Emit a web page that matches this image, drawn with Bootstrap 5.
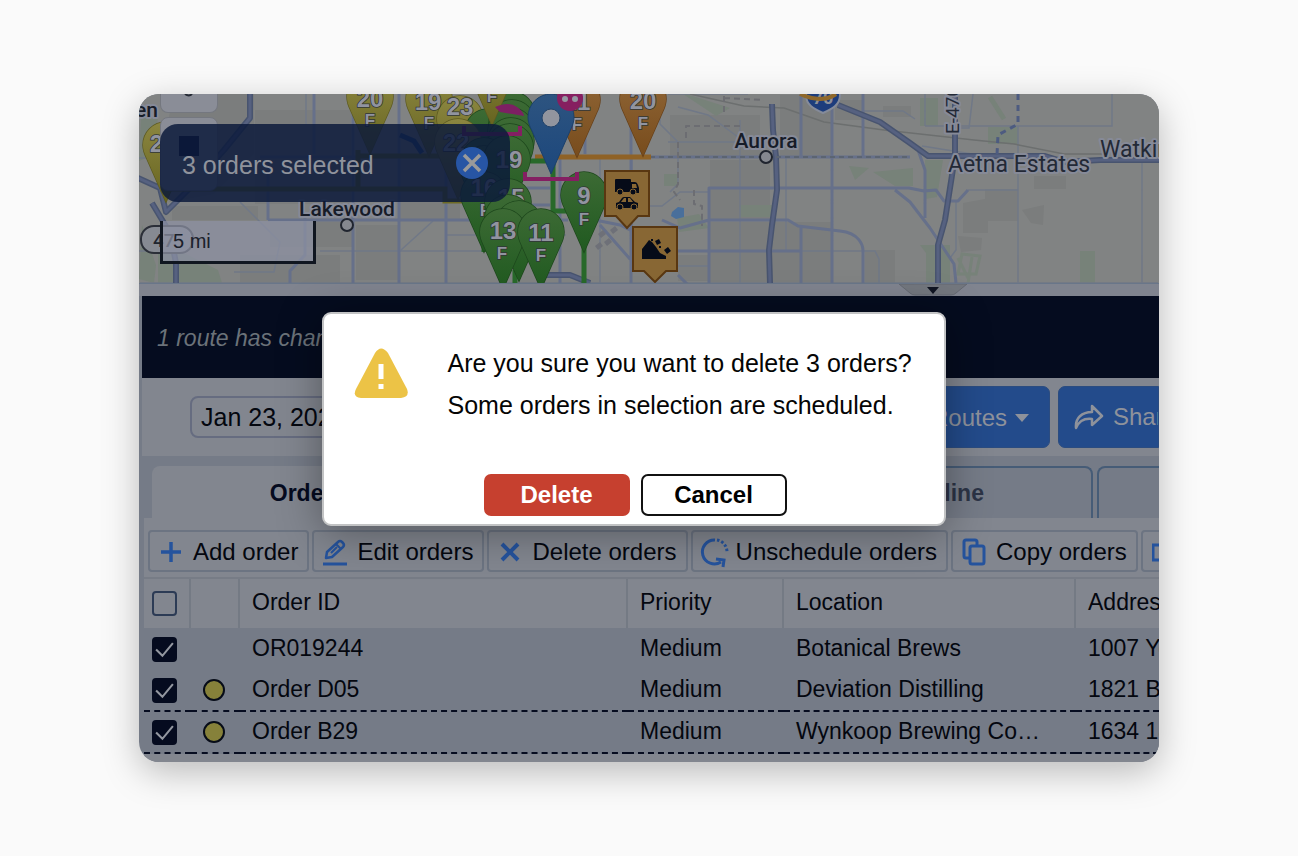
<!DOCTYPE html>
<html lang="en">
<head>
<meta charset="utf-8">
<meta name="viewport" content="width=device-width, initial-scale=1">
<title>Delete orders</title>
<link href="https://cdn.jsdelivr.net/npm/bootstrap@5.3.0/dist/css/bootstrap.min.css" rel="stylesheet">
<style>
:root{--ink:#04070f;--panel:#82868f;--sel:#757b87;--navy:#050c1f;--blue:#234b8b;--line:#6c7482}
body{background:#fafafa;font-family:"Liberation Sans",Arial,sans-serif;color:var(--ink);font-size:23px;line-height:28px}
.stage{padding:94px 139px}
.app{border-radius:20px;background:var(--sel)}
.app-shadow{border-radius:20px;box-shadow:0 10px 36px rgba(0,0,0,.26)}
.map-area{height:189px;background:#818383}
.map-svg{font-family:Roboto,sans-serif;font-weight:500}
.zoom-stack{left:21px;top:0}
.zoom-key{width:58px;height:19px;background:#8a8d97;border:1px solid #74777f;border-top:0;border-radius:0 0 8px 8px;padding:0}
.stop-key{width:58px;height:74px;background:#8a8d97;border:1px solid #74777f;border-radius:8px;padding:0}
.scale-box{left:21px;top:127px;width:156px;height:43px;border:3px solid #101620;border-top:0;background:rgba(142,146,163,.72);font-size:20px;padding:6px 10px;color:#1a202b}
.notice{left:21px;top:30px;width:350px;height:78px;border-radius:18px;background:rgba(11,25,58,.84);font-size:25px;color:#8f939c;padding:4px 22px 0}
.notice button{width:32px;height:32px;background:#2755a4;padding:0}
.splitter{height:13px;background:#80848f;border-top:1px solid #697689}
.work{margin-left:3px}
.route-note{height:82px;background:var(--navy);color:#6b7279;font-style:italic;padding:2px 15px 0}
.plan-bar{height:78px;background:var(--panel);padding-left:48px;gap:8px}
.date-box{width:200px;height:42px;font-size:25px;background:transparent;border:2px solid #666c80;border-radius:8px;padding:0 9px;color:var(--ink)}
.plan-btn{height:62px;font-size:24px;color:#8e929b;background:var(--blue);border:1px solid #2b4c80;border-radius:7px;padding:0}
.routes-btn{width:170px;padding:2px 20px 0 0}
.share-btn{width:101px;padding-left:15px;border-radius:7px 0 0 7px;overflow:hidden}
.caret{border:7px solid transparent;border-top:8px solid #8e929b;border-bottom:0}
.tab-strip{padding:10px 0 0 10px;gap:4px;height:62px}
.tab-strip button{flex:0 0 311px;border:2px solid #465c77;border-bottom:0;border-radius:8px 8px 0 0;background:transparent;color:#2c3446;font-weight:700;padding:0}
.tab-strip .picked{background:var(--panel);border-color:var(--panel);color:#050b1f}
.order-pane{margin-left:2px;background:var(--panel)}
.tool-row{padding:12px 0 0 4px;gap:3px;height:59px}
.tool{flex:none;height:42px;border:2px solid var(--line);border-radius:4px;background:transparent;color:var(--ink);font-size:24px;padding:1px 9px 0 9px;gap:10px;line-height:28px}
.tool svg{width:24px;height:28px;color:#25539d}
.orders{table-layout:fixed;border-collapse:separate;border-spacing:0;border-top:2px solid #777c86}
.orders th,.orders td{padding:0 0 3px 12px;font-weight:400;white-space:nowrap;overflow:hidden}
.orders th{height:49px;border-right:2px solid #747a84}
.orders td{height:42px;background:var(--sel)}
.orders .cut td{border-bottom:2px dashed #060c20}
.orders td:first-child,.orders th:first-child{padding:0 0 0 8px}
.orders td:nth-child(2){padding-bottom:0}
.c-box{width:47px}.c-dot{width:49px}.c-id{width:388px}.c-pri{width:156px}.c-loc{width:292px}
.orders .form-check-input{width:25px;height:25px;margin:0;border:2px solid #2c3b55;border-radius:4px;background-color:transparent;float:none;display:block}
.orders .form-check-input:checked{background-color:#050b1f;border-color:#050b1f;background-image:url("data:image/svg+xml,%3Csvg xmlns='http://www.w3.org/2000/svg' viewBox='0 0 20 20'%3E%3Cpath fill='none' stroke='%2392969f' stroke-width='2' d='m2 10 6 6 10-12'/%3E%3C/svg%3E")}
.dot{width:22px;height:22px;border:2px solid #070c18;border-radius:50%;background:#86813a}
.foot{height:8px}
.ask-layer{inset:0;padding:218px 31px 0 0}
.ask{width:624px;height:214px;border-radius:9px;border:2px solid #c2c3c4;background:#fff;box-shadow:0 6px 44px rgba(0,0,0,.36);color:#050505}
.ask-top{padding:28px 0 0 30px;gap:39px;font-size:25px;line-height:42px}
.ask-top svg{width:55px;height:50px;margin-top:6px}
.ask-keys{gap:11px;padding:48px 0 0 160px}
.ask-keys button{width:146px;height:42px;font-size:24px;font-weight:700;border-radius:7px;padding:0;line-height:28px}
.yes{background:#c6402f;border:2px solid #c6402f;color:#fff}
.no{background:#fff;border:2px solid #111;color:#000}
</style>
</head>
<body>
<main class="stage">
<div class="app-shadow position-relative">
<div class="app overflow-hidden">

<section class="map-area position-relative overflow-hidden" aria-label="Map">
<svg class="map-svg d-block w-100 h-100" viewBox="139 94 1020 189" preserveAspectRatio="xMinYMin slice">
<defs>
<linearGradient id="gr" x1="0" y1="0" x2="0" y2="1"><stop offset="0" stop-color="#3c6a34"/><stop offset="1" stop-color="#205a20"/></linearGradient>
<linearGradient id="ye" x1="0" y1="0" x2="0" y2="1"><stop offset="0" stop-color="#8b8640"/><stop offset="1" stop-color="#67641f"/></linearGradient>
<linearGradient id="or" x1="0" y1="0" x2="0" y2="1"><stop offset="0" stop-color="#8f6536"/><stop offset="1" stop-color="#784c1c"/></linearGradient>
<linearGradient id="bl" x1="0" y1="0" x2="0" y2="1"><stop offset="0" stop-color="#2d5480"/><stop offset="1" stop-color="#1c477c"/></linearGradient>
<path id="pin" d="M0 0-19-43C-22-49-23-53-23-57A23 23 0 0 1 23-57C23-53 22-49 19-43Z"/>
</defs>
<g fill="#7b7d7d">
<path d="M174 94h80v60l-40 40-45 8-10-40zM255 110h96v94h-96zM172 206h86v14h-86zM270 222h82v25h-82zM356 225h42v55h-42zM240 255h100v28H240zM400 160h60v60h-60zM670 115h90v42h-90zM710 160h60v60h-60zM780 95h52v62h-52zM710 222h122v60H710zM835 100h28v20h-28zM865 250h30v33h-30zM678 255h30v26h-30z"/>
<path d="M963 203l22-4v-10h33v32h-30v12h-25zM958 236l24 2-1 12-20 2zM1022 210l22-5-1 20-12-2zM1034 176h32v13h-32zM883 106h28v11h-28z"/>
</g>
<g fill="#778279">
<path d="M141 115l18-5-6 45-14 6zM142 225l14 40-2 18-15-4zM158 240l60 30 4 13h-64zM560 200h22v20zM677 218l22-4 10 14-30 4zM849 166l20 2-14 12zM873 172l40-4v18l-18 0zM925 160h18l-6 37-12 2zM920 245h30v38h-24v-30zM988 127h30v17h-30zM1080 251h15v32h-15zM740 205h32v12h-32zM664 174h14v12h-14zM920 98h18v28h-18z"/>
<path d="M990 97l14 22" stroke="#778279" stroke-width="5"/>
<path d="M962 254l18 2-4 18-18 0zM968 283l4-26M958 258l10 20" fill="none" stroke="#778279" stroke-width="3"/>
<path d="M680 92l50 16-14 8z"/>
</g>
<g fill="none" stroke="#707887" stroke-width="1.500">
<path d="M139 158h36M139 251h20M306 94v30M240 202l40 40-6 30-40 0M320 251h230M140 283h1018M401 250l32-29M660 94v30l18 18v42l-8 8M668 94h80M668 142h95M650 206h12l18-14h29M740 120v163M786 157v93M863 111h40l12 8M678 266h31M800 251h75l4 8v24M678 107l30 8 30 22M925 126h187v-32M925 94v32M968 190h50M1018 126v157M1142 160v123M956 200v50l-6 8M922 146l50 8M973 94l-4 34h-14M490 94v34M632 157v94M600 157v126M446 235h120"/>
<path d="M690 94l54 12 40 2 40 14 60 8 90 10 40 4 50 10 40 0" stroke="#6c6f6f"/>
</g>
<g fill="none" stroke="#66708a" stroke-width="3" stroke-linejoin="round">
<path d="M353 94v189M268 220h300M268 220v-60M399 94v189M446 94v189M314 94v60M560 94v189M585 94v60M631 94v189M260 157h140M290 283v-12l15-16v-40M470 188h80M480 205h70M590 219l30 6 24 12M600 225l30 34 20 10"/>
<path d="M649 157h261M709 283v-95h180l20 0 15 3 12-1 8 11h14l10-11M662 220l18 8 29-8h79l10 6 42 5c20 2 23 15 23 20v32M678 251h122M801 94v63M801 226v57M832 94v189M863 94v63M895 190l15 12 20 26 24 36 2 19M918 150l7 20v48M678 275l10 10"/>
</g>
<g fill="none" stroke-linejoin="round">
<path d="M250 94v24l-26 32-34 38-24 24-6-24-22-10M176 283v-20l-6-30-18-30M772 104l1 26 3 27 1 33-5 35-3 25 1 33M838 105l42 17 30 21 18 13h30l87 0 20 6 35-2h64M955 94v62l-10 64-7 25v38M545 275l25 0 20 8" stroke="#48546f" stroke-width="6"/>
<path d="M250 94v24l-26 32-34 38-24 24-6-24-22-10M176 283v-20l-6-30-18-30M772 104l1 26 3 27 1 33-5 35-3 25 1 33M838 105l42 17 30 21 18 13h30l87 0 20 6 35-2h64M955 94v62l-10 64-7 25v38M545 275l25 0 20 8" stroke="#566180" stroke-width="3"/>
<path d="M1018 94v30l-20 11-1 20" stroke="#4d5b80" stroke-width="3" stroke-dasharray="6 5"/>
<path d="M650 157h260" stroke="#5b6472" stroke-width="2" stroke-dasharray="5 4"/>
<path d="M740 126h-54v16M678 142v42l-4 8 6 8M694 190v14l8 2v20M724 96v20M724 98l40 2" stroke="#6c6d72" stroke-width="2" stroke-dasharray="6 4"/>
</g>
<path d="M672 212l6-5 6 1v9l-8 2-5-3z" fill="#496f9b"/>
<g fill="#6e7078"><path d="M598 234l5-4 3 4-5 4zM604 242l5-4 3 4-5 4zM595 246l5-4 3 4-5 4zM610 230l5-4 3 4-5 4z"/></g>
<!-- Interstate shield -->
<path d="M806 90h34v5c0 10-8 14-17 18-9-4-17-8-17-18z" fill="#1d3d7c" stroke="#858b9a" stroke-width="2"/>
<text x="823" y="104" font-size="18" font-weight="700" text-anchor="middle" fill="#8c909a">70</text>
<path d="M800 94q22 10 36 0" stroke="#8f682b" stroke-width="4" fill="none"/>
<!-- place names -->
<g fill="#171c28" stroke="#868a98" stroke-width="4" paint-order="stroke" font-size="21" stroke-linejoin="round">
<text x="135" y="117">en</text>
<text x="347" y="216" text-anchor="middle">Lakewood</text>
<text x="766" y="148" text-anchor="middle">Aurora</text>
<g fill="#232936" font-size="23" font-weight="400">
<text x="948" y="172">Aetna Estates</text>
<text x="1100" y="157">Watkins</text>
<text transform="translate(959 134) rotate(-90)" font-size="19">E-470</text>
</g>
</g>
<circle cx="347" cy="225" r="6" fill="#85888f" stroke="#20252f" stroke-width="2"/>
<circle cx="766" cy="157" r="6" fill="#85888f" stroke="#20252f" stroke-width="2"/>
<rect x="141" y="226" width="52" height="27" rx="13" fill="#868a92" stroke="#2b2f38" stroke-width="2"/>
<text x="153" y="247" font-size="19" fill="#20252f">47</text>
<!-- routes -->
<g fill="none" stroke-width="5">
<path d="M160 189h285v12h20M358 156h86M358 150v38" stroke="#6d6a24"/>
<path d="M535 157h116" stroke="#8f6226"/>
<path d="M530 161h23v50h14M584 240v43M484 200v52M515 270v13" stroke="#28692a"/>
<path d="M400 135l14 6 8 12" stroke="#24477a"/>
</g>
<!-- numbered stops -->
<g font-family="Liberation Sans,sans-serif" font-weight="700" fill="#9194a0" stroke="#303638" stroke-width="1.500" paint-order="stroke" text-anchor="middle" font-size="24">
<g fill="url(#ye)" stroke="#5d5a20"><use href="#pin" x="166" y="202"/><use href="#pin" x="370" y="154"/><use href="#pin" x="429" y="156"/><use href="#pin" x="460" y="176"/></g>
<text x="163" y="152">21</text><text x="370" y="107">20</text><text x="370" y="126" font-size="17">F</text>
<text x="428" y="110">19</text><text x="429" y="129" font-size="17">F</text><text x="460" y="115">23</text>
<g fill="url(#gr)" stroke="#1d471c"><use href="#pin" x="488" y="189"/><use href="#pin" x="512" y="172"/><use href="#pin" x="512" y="180"/><use href="#pin" x="511" y="188"/></g>
<g fill="url(#ye)" stroke="#5d5a20"><use href="#pin" x="458" y="199"/><use href="#pin" x="492" y="125"/></g>
<text x="456" y="151">22</text><text x="492" y="102" font-size="17">F</text>
<path d="M495 107q14-6 22 0 6 4 7 9l-24 -4z" fill="#7d2063" stroke="none"/>
<g fill="url(#gr)" stroke="#1d471c"><use href="#pin" x="511" y="198"/><use href="#pin" x="510" y="204"/><use href="#pin" x="484" y="218"/><use href="#pin" x="484" y="226"/><use href="#pin" x="507" y="216"/></g>
<text x="509" y="168">19</text>
<g fill="url(#gr)" stroke="#1d471c"><use href="#pin" x="484" y="252"/></g><text x="484" y="196">16</text><text x="485" y="216" font-size="17">F</text>
<g fill="url(#gr)" stroke="#1d471c"><use href="#pin" x="508" y="259"/></g><text x="511" y="206">15</text>
<g fill="url(#gr)" stroke="#1d471c"><use href="#pin" x="508" y="275"/><use href="#pin" x="519" y="281"/></g>
<g fill="url(#gr)" stroke="#1d471c"><use href="#pin" x="503" y="289"/><use href="#pin" x="541" y="289"/><use href="#pin" x="584" y="252"/></g>
<text x="503" y="239">13</text><text x="541" y="241">11</text><text x="584" y="204">9</text>
<g font-size="17"><text x="502" y="259">F</text><text x="541" y="261">F</text><text x="584" y="225">F</text></g>
<g fill="url(#or)" stroke="#674019"><use href="#pin" x="577" y="157"/><use href="#pin" x="643" y="156"/></g>
<text x="577" y="110">21</text><text x="643" y="109">20</text><g font-size="17"><text x="577" y="130">F</text><text x="643" y="129">F</text></g>
</g>
<use href="#pin" x="551" y="174" fill="url(#bl)" stroke="#1c416c"/><circle cx="551" cy="118" r="9" fill="#92959e" stroke="#24446a"/>
<circle cx="570" cy="98" r="13" fill="#861f60"/><circle cx="565" cy="99" r="3" fill="#9497a0"/><circle cx="575" cy="99" r="3" fill="#9497a0"/>
<path d="M464 126v8h56v-8M525 172v7h52v-7" fill="none" stroke="#841f62" stroke-width="4"/>
<!-- road hazard signs -->
<g fill="#886734" stroke="#593711" stroke-width="2">
<path d="M605 171h44v45h-11l-11 12-11-12h-11z"/><path d="M633 227h44v44h-11l-11 11-11-11h-11z"/>
</g>
<g fill="#060b18">
<path d="M615 180q0-1 1-1h14q1 0 1 1v12h-16z"/><path fill-rule="evenodd" d="M631 182h4q2 0 3 3l1 3v5h-8zM632 184v4h5l-1-4z"/><circle cx="620" cy="192" r="3" stroke="#886734"/><circle cx="633" cy="192" r="3" stroke="#886734"/>
<path fill-rule="evenodd" d="M616 203l3-1 3-4q1-1 2-1h6l5 5 3 1v5h-22zM621 202h5v-4h-2zM628 202h5l-3-4h-2z"/><circle cx="620" cy="207" r="3" stroke="#886734"/><circle cx="634" cy="207" r="3" stroke="#886734"/>
<path d="M642 259v-10l4-5 3-4 3 2 4 5 4 6 6 3v3zM655 241l4-2 2 4-4 2zM664 250l4-3 3 4-4 3zM651 239h2v2h-2zM659 246h2v2h-2z"/>
</g>
</svg>

<div class="zoom-stack position-absolute d-flex flex-column gap-1">
<button class="zoom-key d-flex justify-content-center" aria-label="Zoom out"><svg width="14" height="3"><path d="M3 0q4 3 7 0" stroke="#252a35" stroke-width="2" fill="none"/></svg></button>
<button class="stop-key d-flex justify-content-center pt-3" aria-label="Stop"><svg width="20" height="22"><path d="M0 2h20v20H0z" fill="#0d1733"/></svg></button>
</div>
<div class="scale-box position-absolute">5 mi</div>
<div class="notice position-absolute d-flex align-items-center justify-content-between" role="status">
<span>3 orders selected</span>
<button class="btn rounded-circle d-flex align-items-center justify-content-center mb-1" aria-label="Clear selection"><svg width="20" height="20" viewBox="0 0 20 20"><path d="M2 2l16 16M18 2L2 18" stroke="#9a9a9a" stroke-width="3.500"/></svg></button>
</div>
</section>

<div class="splitter d-flex justify-content-end">
<svg width="260" height="12" viewBox="0 0 260 12"><path d="M0 0h68l-11 9q-2 2-5 2H16q-3 0-5-2z" fill="#73777e" stroke="#656972"/><path d="M28 3h12l-6 7z" fill="#101522"/></svg>
</div>

<div class="work">
<div class="route-note d-flex align-items-center">1 route has changed</div>
<div class="plan-bar d-flex align-items-center">
<input class="date-box" type="text" value="Jan 23, 2024" aria-label="Date">
<button class="plan-btn routes-btn ms-auto d-flex align-items-center justify-content-end gap-2">Routes <span class="caret"></span></button>
<button class="plan-btn share-btn d-flex align-items-center"><svg class="flex-shrink-0 me-2" width="31" height="28" viewBox="0 0 31 28"><path d="M18 3l10 10-10 9v-6C10 15 5 18 2 25 1 15 8 9 18 9z" fill="none" stroke="#8e929b" stroke-width="2.500" stroke-linejoin="round"/></svg>Share</button>
</div>
<div class="tab-strip d-flex overflow-hidden">
<button class="picked">Orders</button><button>Routes</button><button>Timeline</button><button aria-label="More"></button>
</div>

<div class="order-pane">
<div class="tool-row d-flex overflow-hidden">
<button class="tool d-flex align-items-center"><svg viewBox="0 0 24 28"><path d="M12 4v20M2 14h20" stroke="currentColor" stroke-width="3.500"/></svg>Add order</button>
<button class="tool d-flex align-items-center"><svg viewBox="0 0 24 28"><path d="M0 26h24" stroke="currentColor" stroke-width="3"/><path d="M3 20l1-6L15 4q2-2 4 0l1 1q2 2 0 4L9 19z" fill="none" stroke="currentColor" stroke-width="2.500" stroke-linejoin="round"/><path d="M13 6l5 5M8 15l6-6" stroke="currentColor" stroke-width="2"/></svg>Edit orders</button>
<button class="tool d-flex align-items-center"><svg viewBox="0 0 24 28"><path d="M4 6l16 16M20 6L4 22" stroke="currentColor" stroke-width="4"/></svg>Delete orders</button>
<button class="tool d-flex align-items-center"><svg class="overflow-visible" viewBox="0 0 24 28"><path d="M13 2A12 12 0 1 0 19 24" fill="none" stroke="currentColor" stroke-width="3"/><path d="M15 2A12 12 0 0 1 25 14" fill="none" stroke="currentColor" stroke-width="3" stroke-dasharray="2.500 2"/><path d="M14 21l8 1-1 7" fill="none" stroke="currentColor" stroke-width="3"/></svg>Unschedule orders</button>
<button class="tool d-flex align-items-center"><svg viewBox="0 0 24 28"><path d="M8 20H4q-2 0-2-2V4q0-2 2-2h9q2 0 2 2v3" fill="none" stroke="currentColor" stroke-width="3"/><rect x="8" y="8" width="14" height="18" rx="2" fill="none" stroke="currentColor" stroke-width="3"/></svg>Copy orders</button>
<button class="tool d-flex align-items-center" aria-label="Export orders"><svg viewBox="0 0 24 28"><path d="M1 7h22v15H1z" fill="none" stroke="currentColor" stroke-width="3"/></svg></button>
</div>
<table class="orders w-100">
<colgroup><col class="c-box"><col class="c-dot"><col class="c-id"><col class="c-pri"><col class="c-loc"><col></colgroup>
<thead><tr><th><input class="form-check-input" type="checkbox" aria-label="Select all"></th><th></th><th>Order ID</th><th>Priority</th><th>Location</th><th class="border-0">Address</th></tr></thead>
<tbody>
<tr><td><input class="form-check-input" type="checkbox" checked aria-label="Select OR019244"></td><td></td><td>OR019244</td><td>Medium</td><td>Botanical Brews</td><td>1007 York</td></tr>
<tr class="cut"><td><input class="form-check-input" type="checkbox" checked aria-label="Select Order D05"></td><td><div class="dot"></div></td><td>Order D05</td><td>Medium</td><td>Deviation Distilling</td><td>1821 Blake</td></tr>
<tr class="cut"><td><input class="form-check-input" type="checkbox" checked aria-label="Select Order B29"></td><td><div class="dot"></div></td><td>Order B29</td><td>Medium</td><td>Wynkoop Brewing Co…</td><td>1634 18th</td></tr>
</tbody>
</table>
<div class="foot"></div>
</div>
</div>
</div>

<div class="ask-layer position-absolute d-flex justify-content-center align-items-start">
<div class="ask" role="alertdialog" aria-labelledby="askText">
<div class="ask-top d-flex">
<svg viewBox="0 0 55 50"><path d="M21 5Q27-4 34 5L53 41Q56 49 47 50H7Q-2 49 2 41Z" fill="#ecc346"/><path d="M27 16v15M27 36v5" stroke="#fff" stroke-width="5"/></svg>
<div id="askText">Are you sure you want to delete 3 orders?<br>Some orders in selection are scheduled.</div>
</div>
<div class="ask-keys d-flex"><button class="btn yes">Delete</button><button class="btn no">Cancel</button></div>
</div>
</div>
</div>
</main>
<script src="https://cdn.jsdelivr.net/npm/bootstrap@5.3.0/dist/js/bootstrap.bundle.min.js"></script>
</body>
</html>
